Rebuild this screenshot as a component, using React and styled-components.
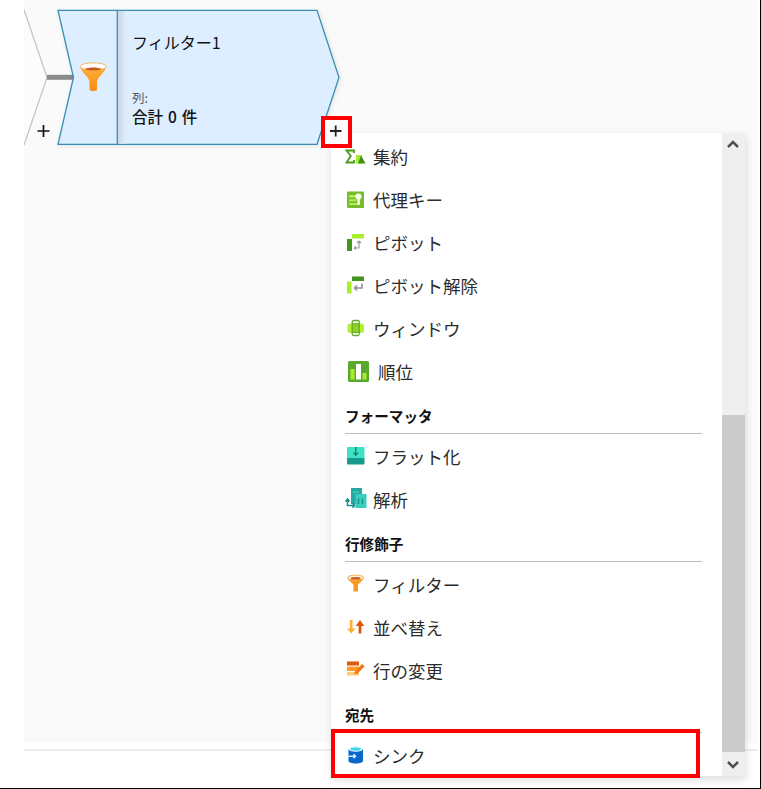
import React from "react";
import styled, { createGlobalStyle, css } from "styled-components";

const GlobalStyle = createGlobalStyle`
  * { box-sizing: border-box; }
  body {
    margin: 0;
    background: #fff;
    font-family: "Noto Sans CJK JP", "Noto Sans", sans-serif;
    color: #222;
  }
  svg { display: block; }
`;

const Frame = styled.div`
  position: relative;
  width: 761px;
  height: 789px;
  overflow: hidden;
  background: #fff;
  border-right: 1px solid #000;
  border-bottom: 1px solid #000;
`;

const Canvas = styled.main`
  position: relative;
  width: 734px;
  height: 743px;
  margin-left: 24px;
  background: #fafafa;
`;

const PanelDivider = styled.div`
  width: 734px;
  height: 2px;
  margin: 6px 0 0 24px;
  background: #ececec;
`;

const FlowShapes = styled.svg`
  position: absolute;
  left: 0;
  top: 0;
`;

const NodeBody = styled.section`
  position: absolute;
  left: 108px;
  top: 30px;
  display: flex;
  flex-direction: column;
  white-space: nowrap;
`;

const NodeTitle = styled.h2`
  margin: 0 0 36px;
  font-size: 16px;
  font-weight: 400;
  line-height: 24px;
  color: #111;
`;

const NodeLabel = styled.span`
  font-size: 12.5px;
  line-height: 16px;
  color: #555;
`;

const NodeTotal = styled.span`
  font-size: 15.5px;
  font-weight: 500;
  line-height: 21px;
  word-spacing: 1.5px;
  color: #111;
`;

const Menu = styled.nav`
  position: absolute;
  left: 331px;
  top: 133px;
  width: 414px;
  height: 643px;
  display: flex;
  background: #fff;
  box-shadow: 1px 4px 8px rgba(0, 0, 0, 0.13);
`;

const MenuList = styled.div`
  flex: 1;
  padding: 3px 20px 0 14px;
  overflow: hidden;
`;

const MenuItem = styled.div`
  display: flex;
  align-items: center;
  height: 43px;
  padding-bottom: 2px;
  font-size: 17.5px;
  line-height: 24px;
  white-space: nowrap;
  color: #2b2b2b;
`;

const ItemIcon = styled.span`
  flex: none;
  width: ${(p) => (p.$wide ? 33 : 28)}px;
  height: 24px;
`;

const GroupTitle = styled.h3`
  height: 40px;
  margin: 0 0 2px;
  padding-top: 11px;
  border-bottom: 1px solid #bdbdbd;
  font-size: 14.6px;
  font-weight: 700;
  line-height: 22px;
  color: #111;
`;

const Scrollbar = styled.div`
  width: 23px;
  display: flex;
  flex-direction: column;
  background: #efefef;
`;

const ScrollButton = styled.div`
  display: flex;
  align-items: center;
  justify-content: center;
  height: 24px;
  padding: ${(p) => (p.$up ? "0 1px 3px 0" : "2px 1px 0 0")};
`;

const ScrollTrack = styled.div`
  flex: 1;
  display: flex;
  align-items: flex-end;
`;

const ScrollThumb = styled.div`
  width: 23px;
  height: 337px;
  background: #cbcbcb;
`;

const tall = css`
  left: 321px;
  top: 116px;
  width: 31px;
  height: 32px;
  border-width: 4px;
`;

const wide = css`
  left: 331px;
  top: 729px;
  width: 369px;
  height: 49px;
  border-width: 4px;
`;

const Highlight = styled.div`
  position: absolute;
  border-style: solid;
  border-color: #fe0000;
  ${(p) => (p.$wide ? wide : tall)}
`;

/* Icons share a 24px tall box whose left edge is the text margin of the list. */
const Icon = ({ children }) => (
  <svg width="26" height="24" viewBox="0 0 26 24" fill="none">
    {children}
  </svg>
);

const icons = {
  aggregate: (
    <Icon>
      <path d="M9 8V5.500H1.500l4.300 5.500L1.500 17.500H9V15" stroke="#4a9a1c" strokeWidth="1.8" />
      <rect x="11" y="10" width="6" height="8.500" fill="#a6ea32" />
      <path d="M16 10.500l4.500 8h-7.500z" fill="#3f8e18" />
    </Icon>
  ),
  key: (
    <Icon>
      <rect x="2" y="3.500" width="17" height="16.500" rx="1" fill="#76bc2d" />
      <path d="M4 7h7v2.500H4zM4 11.200h7v2H4zM4 15h11v2H4z" fill="#b6ee59" />
      <circle cx="13.500" cy="8.500" r="3.100" fill="#f7ffe9" />
      <path d="M12.300 10.500h2.600v6h-2.600z" fill="#f7ffe9" />
    </Icon>
  ),
  pivot: (
    <Icon>
      <rect x="7" y="3" width="12" height="4.500" fill="#a9ee2a" />
      <rect x="2" y="8" width="5" height="12" fill="#459321" />
      <path d="M9.500 17H14v-7M12 12l2-2 2 2M11 15.300L9.300 17l1.700 1.700" stroke="#999" strokeWidth="1.200" />
    </Icon>
  ),
  unpivot: (
    <Icon>
      <rect x="7" y="2.500" width="12" height="4.500" fill="#459321" />
      <rect x="2" y="7.500" width="4.600" height="12" fill="#a9ee2a" />
      <path d="M17 9.500V14H9.500M12 11.500L9.500 14l2.500 2.500" stroke="#8f8f8f" strokeWidth="1.500" />
    </Icon>
  ),
  window: (
    <Icon>
      <rect x="2.500" y="6.500" width="16.500" height="9.500" rx="2.500" fill="#b4ee3a" />
      <rect x="7.500" y="7" width="6.500" height="8" fill="#8bd420" />
      <rect x="7.200" y="3.500" width="7" height="15" rx="1.500" stroke="#67a72a" strokeWidth="1.300" />
      <path d="M7 6.800h7.500M7 15.500h7.500" stroke="#67a72a" strokeWidth="1" />
    </Icon>
  ),
  rank: (
    <Icon>
      <rect x="3" y="1" width="21" height="21" rx="1.500" fill="#58a92d" />
      <rect x="5.500" y="9" width="4" height="10.500" fill="#a9ee2a" />
      <rect x="11" y="4" width="5" height="15.500" fill="#fff" />
      <rect x="17.500" y="13" width="4" height="6.500" fill="#a9ee2a" />
    </Icon>
  ),
  flatten: (
    <Icon>
      <rect x="2" y="2" width="17.500" height="12" rx="1" fill="#3fe2c5" />
      <path d="M2 13h17.500v5.500a1 1 0 0 1-1 1H3a1 1 0 0 1-1-1z" fill="#179a8a" />
      <path d="M10.700 2v8M8.300 7.800l2.400 2.400 2.400-2.400" stroke="#138577" strokeWidth="1.500" />
    </Icon>
  ),
  parse: (
    <Icon>
      <rect x="6" y="0" width="11" height="16" fill="#25aaa0" />
      <path d="M8 4h6" stroke="#67d8cb" />
      <rect x="10.500" y="6" width="11" height="14" fill="#39cebd" />
      <path d="M13.500 10.500v5.500M17.500 10.500v5.500" stroke="#168d82" strokeWidth="1.200" />
      <path d="M2.500 11.500V17.500H9M.5 13.500l2-2.500 2 2.500M7.500 15.300l2.300 2.200-2.300 2.200" stroke="#168f88" strokeWidth="1.500" />
    </Icon>
  ),
  filter: (
    <Icon>
      <path d="M2.500 4.500C3 8 8 10 8.500 12v6.500h4.500V12c.5-2 5.500-4 6-7.500z" fill="#f99a20" />
      <ellipse cx="10.700" cy="4.700" rx="8" ry="2.600" fill="#fff3df" stroke="#f8ac4b" />
      <ellipse cx="10.700" cy="5.400" rx="5" ry="1.300" fill="#cd5d18" />
    </Icon>
  ),
  sort: (
    <Icon>
      <path d="M6.200 4v10" stroke="#ffad36" strokeWidth="2.600" />
      <path d="M2 12.500h8.400L6.200 17.500z" fill="#ffad36" />
      <path d="M15 17.500V8" stroke="#d95805" strokeWidth="2.800" />
      <path d="M10.700 10h8.600L15 4z" fill="#d95805" />
    </Icon>
  ),
  alter: (
    <Icon>
      <rect x="2" y="2.500" width="12" height="4" fill="#dc5b0a" />
      <rect x="2" y="7.500" width="12" height="4.500" fill="#ff9c2c" />
      <rect x="2" y="13" width="12" height="3.500" fill="#ffcd7b" />
      <path d="M10 12.500l7-7.500 2.700 2.200-7 7.300-3.700 1z" fill="#ef7b16" />
    </Icon>
  ),
  sink: (
    <Icon>
      <path d="M3.500 5v12c0 3.300 14.500 3.300 14.500 0V5z" fill="#0868c9" />
      <ellipse cx="10.700" cy="5" rx="7.200" ry="2.800" fill="#f3fbff" />
      <ellipse cx="10.700" cy="5" rx="5.400" ry="1.700" fill="#43d5ef" />
      <path d="M3.500 12.200H10M8.500 10.200l2 2-2 2" stroke="#d8efff" strokeWidth="1.500" />
    </Icon>
  ),
};

const groups = [
  {
    items: [
      ["aggregate", "集約"],
      ["key", "代理キー"],
      ["pivot", "ピボット"],
      ["unpivot", "ピボット解除"],
      ["window", "ウィンドウ"],
      ["rank", "順位"],
    ],
  },
  { title: "フォーマッタ", items: [["flatten", "フラット化"], ["parse", "解析"]] },
  {
    title: "行修飾子",
    items: [["filter", "フィルター"], ["sort", "並べ替え"], ["alter", "行の変更"]],
  },
  { title: "宛先", items: [["sink", "シンク"]] },
];

function Flow() {
  return (
    <FlowShapes width="340" height="160" viewBox="24 0 340 160" fill="none">
      <defs>
        <linearGradient id="cone" x1="0" y1="0" x2="0" y2="1">
          <stop offset="0" stopColor="#ffb13b" />
          <stop offset="1" stopColor="#f78d13" />
        </linearGradient>
        <linearGradient id="edge" x1="0" y1="0" x2="1" y2="0">
          <stop offset="0" stopColor="#ccd6df" />
          <stop offset="1" stopColor="#dceeff" />
        </linearGradient>
        <filter id="shade" x="-10%" y="-10%" width="120%" height="120%">
          <feDropShadow dx="1" dy="1" stdDeviation="2" floodOpacity="0.1" />
        </filter>
      </defs>
      <path d="M24 9.500L47 77.500 24 145z" fill="#fcfcfc" />
      <path d="M24 9.500L47 77.500 24 145" stroke="#c6c6c6" strokeWidth="1.300" />
      <path d="M47 77.300h26" stroke="#8b8b8b" strokeWidth="5" />
      <path
        d="M58 10.300H317L339 77.500 317 144.300H58L73.500 77.500z"
        fill="#dceeff"
        stroke="#398fb1"
        strokeWidth="1.300"
        filter="url(#shade)"
      />
      <rect x="118" y="11" width="8" height="132.700" fill="url(#edge)" />
      <path d="M117.300 10v134.500" stroke="#398fb1" strokeWidth="1.300" />
      <path d="M80 66c1 7 9.500 11 9.500 16v7.500c0 2 7.500 2 7.500 0V82c0-5 8.500-9 9.500-16z" fill="url(#cone)" />
      <ellipse cx="93.300" cy="66.500" rx="13" ry="3.700" fill="#fff" stroke="#f8b765" />
      <path d="M85 69c3-2 13.500-2 16.500 0-4 2-12.500 2-16.500 0z" fill="#c8591b" />
      <path d="M37.500 131h12M43.500 125v12" stroke="#111" strokeWidth="1.700" />
    </FlowShapes>
  );
}

const AddMark = styled.svg`
  position: absolute;
  left: 325px;
  top: 120px;
  background: #fcfcfc;
`;

const Chevron = ({ up }) => (
  <svg width="14" height="10" viewBox="0 0 14 10" fill="none">
    <path d={up ? "M2 8l5-5 5 5" : "M2 2l5 5 5-5"} stroke="#505050" strokeWidth="2.500" />
  </svg>
);

export default function App() {
  return (
    <>
      <GlobalStyle />
      <Frame>
        <Canvas>
          <Flow />
          <NodeBody>
            <NodeTitle>フィルター1</NodeTitle>
            <NodeLabel>列:</NodeLabel>
            <NodeTotal>合計 0 件</NodeTotal>
          </NodeBody>
        </Canvas>
        <PanelDivider />
        <Menu>
          <MenuList>
            {groups.map((group, i) => (
              <React.Fragment key={i}>
                {group.title && <GroupTitle>{group.title}</GroupTitle>}
                {group.items.map(([icon, label]) => (
                  <MenuItem key={icon}>
                    <ItemIcon $wide={icon === "rank"}>{icons[icon]}</ItemIcon>
                    {label}
                  </MenuItem>
                ))}
              </React.Fragment>
            ))}
          </MenuList>
          <Scrollbar>
            <ScrollButton $up>
              <Chevron up />
            </ScrollButton>
            <ScrollTrack>
              <ScrollThumb />
            </ScrollTrack>
            <ScrollButton>
              <Chevron />
            </ScrollButton>
          </Scrollbar>
        </Menu>
        <AddMark width="23" height="24" viewBox="325 120 23 24">
          <path d="M330 131h11.500M335.700 125.500v11" stroke="#222" strokeWidth="1.800" />
        </AddMark>
        <Highlight />
        <Highlight $wide />
      </Frame>
    </>
  );
}
